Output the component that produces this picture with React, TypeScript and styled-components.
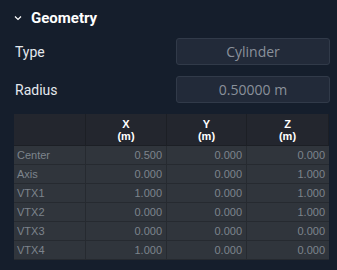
import React from "react";
import styled, { createGlobalStyle } from "styled-components";

const Global = createGlobalStyle`
  html, body { margin: 0; padding: 0; background: #151e2c; }
  body { font-family: Roboto, "Liberation Sans", sans-serif; }
`;

const Panel = styled.div`
  width: 337px;
  height: 270px;
  box-sizing: border-box;
  background: #151e2c;
  padding: 8px 7px 0 14px;
  display: flex;
  flex-direction: column;
`;

const SectionHeader = styled.div`
  display: flex;
  align-items: center;
  height: 20px;
  gap: 9px;
  color: #ffffff;
  font-family: Roboto, "Liberation Sans", sans-serif;
  font-weight: 700;
  font-size: 15px;
`;

const Chevron = styled.svg`
  width: 8px;
  height: 6px;
  margin-left: 0px;
`;

const FieldRow = styled.div<{ $mt: number }>`
  display: grid;
  grid-template-columns: 162px 154px;
  align-items: center;
  height: 27px;
  margin-top: ${(p) => p.$mt}px;
`;

const Label = styled.div`
  color: #e4e8ee;
  font-size: 14px;
  padding-left: 1px;
`;

const ValueBox = styled.div`
  height: 27px;
  box-sizing: border-box;
  border: 1px solid #313a49;
  border-radius: 3px;
  background: #222a39;
  color: #8a919b;
  font-family: "Open Sans", "Liberation Sans", sans-serif;
  font-size: 14px;
  display: flex;
  align-items: center;
  justify-content: center;
`;

const Table = styled.div`
  margin-top: 11px;
  width: 315px;
  display: grid;
  grid-template-columns: 72px 81px 80px 82px;
  background: #272b31;
  font-family: "Liberation Sans", sans-serif;
  font-size: 11px;
`;

const HeadCell = styled.div`
  height: 31px;
  background: #23262e;
  border-right: 1px solid #1c1f25;
  border-bottom: 1px solid #1c1f25;
  color: #ffffff;
  font-weight: 700;
  display: flex;
  flex-direction: column;
  align-items: center;
  justify-content: center;
  line-height: 12px;
  &:last-child { border-right: none; }
`;

const Cell = styled.div<{ $label?: boolean; $last?: boolean }>`
  height: 18px;
  background: #30353c;
  border-right: ${(p) => (p.$last ? "none" : "1px solid #262a30")};
  border-bottom: 1px solid #262a30;
  color: #7d848c;
  display: flex;
  align-items: center;
  justify-content: ${(p) => (p.$label ? "flex-start" : "flex-end")};
  padding: ${(p) => (p.$label ? "0 0 0 3px" : "0 4px 0 0")};
`;

const rows: [string, string, string, string][] = [
  ["Center", "0.500", "0.000", "0.000"],
  ["Axis", "0.000", "0.000", "1.000"],
  ["VTX1", "1.000", "0.000", "1.000"],
  ["VTX2", "0.000", "0.000", "1.000"],
  ["VTX3", "0.000", "0.000", "0.000"],
  ["VTX4", "1.000", "0.000", "0.000"],
];

export default function App() {
  return (
    <>
      <Global />
      <Panel>
        <SectionHeader>
          <Chevron viewBox="0 0 8 6">
            <path d="M1 1.5 L4 4.5 L7 1.5" stroke="#ffffff" strokeWidth="1.2" fill="none" />
          </Chevron>
          <span>Geometry</span>
        </SectionHeader>
        <FieldRow $mt={10}>
          <Label>Type</Label>
          <ValueBox>Cylinder</ValueBox>
        </FieldRow>
        <FieldRow $mt={11}>
          <Label>Radius</Label>
          <ValueBox>0.50000 m</ValueBox>
        </FieldRow>
        <Table>
          <HeadCell />
          {["X", "Y", "Z"].map((axis) => (
            <HeadCell key={axis}>
              <span>{axis}</span>
              <span>(m)</span>
            </HeadCell>
          ))}
          {rows.map((r) =>
            r.map((v, i) => (
              <Cell key={r[0] + i} $label={i === 0} $last={i === 3}>
                {v}
              </Cell>
            ))
          )}
        </Table>
      </Panel>
    </>
  );
}
